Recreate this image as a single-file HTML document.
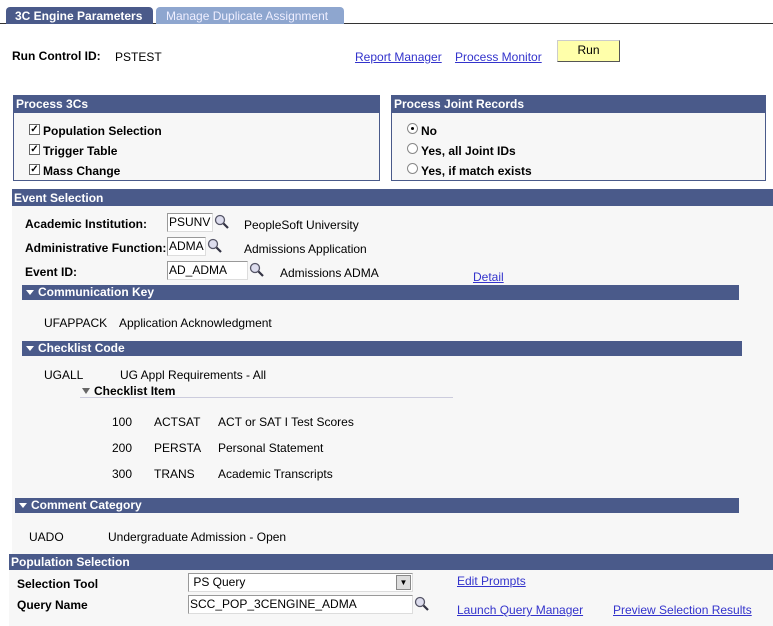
<!DOCTYPE html>
<html><head><meta charset="utf-8"><style>
*{margin:0;padding:0;box-sizing:border-box}
body{width:773px;height:626px;background:#fff;font-family:"Liberation Sans",Arial,sans-serif;font-size:12px;color:#000;position:relative;overflow:hidden}
.a{position:absolute;white-space:nowrap}
.b{font-weight:bold}
.lnk{color:#3333cc;text-decoration:underline}
.hd{position:absolute;background:#4a5a8a;color:#fff;font-weight:bold;font-size:12px;line-height:16px;padding-left:2px}
.bg{position:absolute;background:#f7f7f7}
.inp{position:absolute;background:#fff;border:1px solid #999;border-right-color:#ddd;border-bottom-color:#ddd;padding-left:1px;line-height:16px;font-size:12px}
.cb{position:absolute;width:11px;height:11px;border:1px solid #666;background:#fff;font-size:10px;line-height:9px;text-align:center;font-weight:bold}
.rd{position:absolute;width:11px;height:11px;border-radius:50%;border:1px solid #888;background:#fff}
.tri{display:inline-block;width:0;height:0;border-left:4px solid transparent;border-right:4px solid transparent;border-top:5px solid #fff;margin:0 4px 1px 2px}
.mg{position:absolute;width:16px;height:16px}
</style></head><body>
<div class="a" style="left:0;top:23px;width:773px;height:1px;background:#333"></div>
<div class="a b" style="left:6px;top:7px;width:147px;height:17px;background:#4a5a8a;color:#fff;border-radius:4px 4px 0 0;padding-left:9px;line-height:18px;font-size:12px">3C Engine Parameters</div>
<div class="a" style="left:156px;top:7px;width:188px;height:17px;background:#8ea6cf;color:#eef;border-radius:4px 4px 0 0;padding-left:10px;line-height:18px;font-size:12px">Manage Duplicate Assignment</div>

<div class="a b" style="left:12px;top:49px">Run Control ID:</div>
<div class="a" style="left:115px;top:50px">PSTEST</div>
<div class="a lnk" style="left:355px;top:50px">Report Manager</div>
<div class="a lnk" style="left:455px;top:50px">Process Monitor</div>
<div class="a" style="left:557px;top:40px;width:63px;height:22px;background:#ffffaa;border:1px solid #ccc;border-right-color:#555;border-bottom-color:#555;text-align:center;line-height:18px">Run</div>

<div class="bg" style="left:13px;top:95px;width:367px;height:86px;border:1px solid #4a5a8a"></div>
<div class="hd" style="left:14px;top:96px;width:365px;height:17px;line-height:17px">Process 3Cs</div>
<div class="cb" style="left:29px;top:124px">✓</div><div class="a b" style="left:43px;top:124px">Population Selection</div>
<div class="cb" style="left:29px;top:144px">✓</div><div class="a b" style="left:43px;top:144px">Trigger Table</div>
<div class="cb" style="left:29px;top:164px">✓</div><div class="a b" style="left:43px;top:164px">Mass Change</div>

<div class="bg" style="left:391px;top:95px;width:375px;height:86px;border:1px solid #4a5a8a"></div>
<div class="hd" style="left:392px;top:96px;width:373px;height:17px;line-height:17px">Process Joint Records</div>
<div class="rd" style="left:407px;top:123px"><div style="position:absolute;left:3px;top:3px;width:3px;height:3px;background:#000;border-radius:50%"></div></div><div class="a b" style="left:421px;top:124px">No</div>
<div class="rd" style="left:407px;top:143px"></div><div class="a b" style="left:421px;top:144px">Yes, all Joint IDs</div>
<div class="rd" style="left:407px;top:163px"></div><div class="a b" style="left:421px;top:164px">Yes, if match exists</div>
<div class="a" style="left:12px;top:189px;width:761px;height:1px;background:#4a5a8a"></div>

<div class="bg" style="left:12px;top:190px;width:761px;height:364px"></div>
<div class="hd" style="left:12px;top:190px;width:761px;height:16px">Event Selection</div>
<div class="a b" style="left:25px;top:217px">Academic Institution:</div>
<div class="inp" style="left:167px;top:213px;width:46px;height:19px">PSUNV</div>
<svg class="mg" style="left:214px;top:214px" viewBox="0 0 16 16"><circle cx="6" cy="6" r="4.5" fill="#dde" stroke="#556" stroke-width="1.3"/><path d="M9.5 9.5L14 14" stroke="#334" stroke-width="2.2"/></svg>
<div class="a" style="left:244px;top:218px">PeopleSoft University</div>
<div class="a b" style="left:25px;top:241px">Administrative Function:</div>
<div class="inp" style="left:167px;top:237px;width:39px;height:19px">ADMA</div>
<svg class="mg" style="left:207px;top:238px" viewBox="0 0 16 16"><circle cx="6" cy="6" r="4.5" fill="#dde" stroke="#556" stroke-width="1.3"/><path d="M9.5 9.5L14 14" stroke="#334" stroke-width="2.2"/></svg>
<div class="a" style="left:244px;top:242px">Admissions Application</div>
<div class="a b" style="left:25px;top:265px">Event ID:</div>
<div class="inp" style="left:167px;top:261px;width:81px;height:19px">AD_ADMA</div>
<svg class="mg" style="left:249px;top:262px" viewBox="0 0 16 16"><circle cx="6" cy="6" r="4.5" fill="#dde" stroke="#556" stroke-width="1.3"/><path d="M9.5 9.5L14 14" stroke="#334" stroke-width="2.2"/></svg>
<div class="a" style="left:280px;top:266px">Admissions ADMA</div>
<div class="a lnk" style="left:473px;top:270px">Detail</div>

<div class="hd" style="left:22px;top:285px;width:717px;height:15px;line-height:15px"><span class="tri"></span>Communication Key</div>
<div class="a" style="left:44px;top:316px">UFAPPACK</div>
<div class="a" style="left:119px;top:316px">Application Acknowledgment</div>

<div class="hd" style="left:22px;top:341px;width:720px;height:15px;line-height:15px"><span class="tri"></span>Checklist Code</div>
<div class="a" style="left:44px;top:368px">UGALL</div>
<div class="a" style="left:120px;top:368px">UG Appl Requirements - All</div>
<div class="a b" style="left:80px;top:384px"><span style="display:inline-block;width:0;height:0;border-left:4px solid transparent;border-right:4px solid transparent;border-top:6px solid #666;margin:0 4px 1px 2px"></span>Checklist Item</div>
<div class="a" style="left:80px;top:397px;width:373px;height:1px;background:#ccd"></div>
<div class="a" style="left:112px;top:415px">100</div><div class="a" style="left:154px;top:415px">ACTSAT</div><div class="a" style="left:218px;top:415px">ACT or SAT I Test Scores</div>
<div class="a" style="left:112px;top:441px">200</div><div class="a" style="left:154px;top:441px">PERSTA</div><div class="a" style="left:218px;top:441px">Personal Statement</div>
<div class="a" style="left:112px;top:467px">300</div><div class="a" style="left:154px;top:467px">TRANS</div><div class="a" style="left:218px;top:467px">Academic Transcripts</div>

<div class="hd" style="left:15px;top:498px;width:724px;height:15px;line-height:15px"><span class="tri"></span>Comment Category</div>
<div class="a" style="left:29px;top:530px">UADO</div>
<div class="a" style="left:108px;top:530px">Undergraduate Admission - Open</div>

<div class="bg" style="left:9px;top:554px;width:764px;height:72px"></div>
<div class="hd" style="left:9px;top:554px;width:764px;height:16px">Population Selection</div>
<div class="a b" style="left:17px;top:577px">Selection Tool</div>
<div class="inp" style="left:188px;top:573px;width:225px;height:19px">&nbsp;PS Query</div>
<div class="a" style="left:396px;top:575px;width:15px;height:15px;background:#ddd;border:1px solid #888;font-size:8px;text-align:center;line-height:13px">▼</div>
<div class="a lnk" style="left:457px;top:574px">Edit Prompts</div>
<div class="a b" style="left:17px;top:598px">Query Name</div>
<div class="inp" style="left:188px;top:595px;width:225px;height:19px">SCC_POP_3CENGINE_ADMA</div>
<svg class="mg" style="left:414px;top:596px" viewBox="0 0 16 16"><circle cx="6" cy="6" r="4.5" fill="#dde" stroke="#556" stroke-width="1.3"/><path d="M9.5 9.5L14 14" stroke="#334" stroke-width="2.2"/></svg>
<div class="a lnk" style="left:457px;top:603px">Launch Query Manager</div>
<div class="a lnk" style="left:613px;top:603px">Preview Selection Results</div>
</body></html>
